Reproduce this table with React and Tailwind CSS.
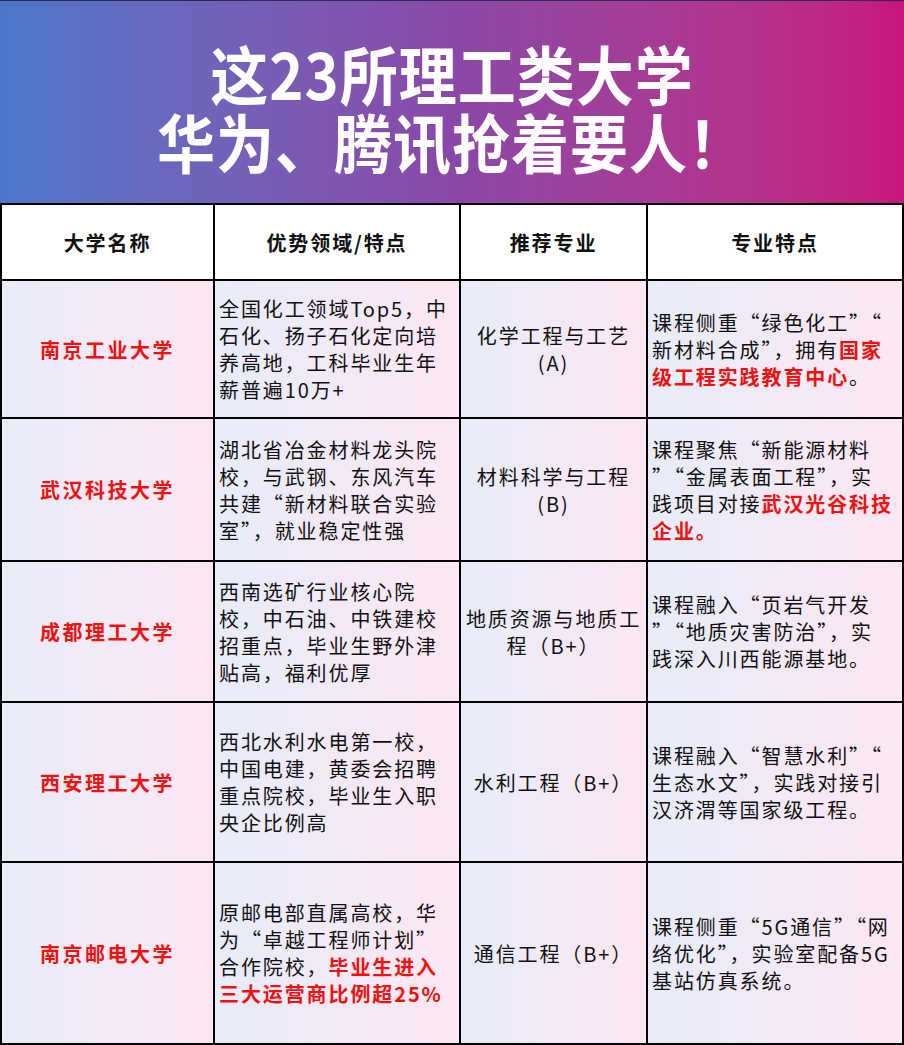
const font = { fontFamily: '"Noto Sans CJK SC", "Noto Sans", sans-serif' };

const rows = [
  {
    h: 'h-[136px]',
    name: '南京工业大学',
    strength: ['全国化工领域Top5，中', '石化、扬子石化定向培', '养高地，工科毕业生年', '薪普遍10万+'],
    major: ['化学工程与工艺', '(A)'],
    feature: [
      '课程侧重“绿色化工”“',
      ['新材料合成”，拥有', { red: '国家' }],
      [{ red: '级工程实践教育中心' }, '。'],
    ],
  },
  {
    h: 'h-[141px]',
    name: '武汉科技大学',
    strength: ['湖北省冶金材料龙头院', '校，与武钢、东风汽车', '共建“新材料联合实验', '室”，就业稳定性强'],
    major: ['材料科学与工程', '(B)'],
    feature: [
      '课程聚焦“新能源材料',
      '”“金属表面工程”，实',
      ['践项目对接', { red: '武汉光谷科技' }],
      [{ red: '企业。' }],
    ],
  },
  {
    h: 'h-[139px]',
    name: '成都理工大学',
    strength: ['西南选矿行业核心院', '校，中石油、中铁建校', '招重点，毕业生野外津', '贴高，福利优厚'],
    major: ['地质资源与地质工', '程（B+）'],
    feature: ['课程融入“页岩气开发', '”“地质灾害防治”，实', '践深入川西能源基地。'],
  },
  {
    h: 'h-[158px]',
    name: '西安理工大学',
    strength: ['西北水利水电第一校，', '中国电建，黄委会招聘', '重点院校，毕业生入职', '央企比例高'],
    major: ['水利工程（B+）'],
    feature: ['课程融入“智慧水利”“', '生态水文”，实践对接引', '汉济渭等国家级工程。'],
  },
  {
    h: 'h-[180px]',
    name: '南京邮电大学',
    strength: [
      '原邮电部直属高校，华',
      '为“卓越工程师计划”',
      ['合作院校，', { red: '毕业生进入' }],
      [{ red: '三大运营商比例超25%' }],
    ],
    major: ['通信工程（B+）'],
    feature: ['课程侧重“5G通信”“网', '络优化”，实验室配备5G', '基站仿真系统。'],
  },
];

function Lines({ lines, center }) {
  return (
    <div className={center ? 'text-center' : 'text-left'}>
      {lines.map((line, i) => (
        <div key={i} className="whitespace-nowrap">
          {(Array.isArray(line) ? line : [line]).map((seg, j) =>
            typeof seg === 'string' ? (
              <span key={j}>{seg}</span>
            ) : (
              <span key={j} className="font-bold text-[#f01010]">
                {seg.red}
              </span>
            )
          )}
        </div>
      ))}
    </div>
  );
}

const cellBg = 'bg-linear-to-r from-[#e8ecf9] to-[#fce7f3]';

export default function App() {
  return (
    <div className="w-[904px] h-[1045px] overflow-hidden bg-white" style={font}>
      <div className="h-[203px] border-t border-[#2a2a55] bg-linear-to-r from-[#4a77c9] via-[#8a48a8] to-[#c8147d] flex flex-col items-center justify-center pt-[8px] text-white font-bold text-[58px] leading-[68px] tracking-[1px]">
        <div className="scale-y-110">这23所理工类大学</div>
        <div className="scale-y-110">华为、腾讯抢着要人！</div>
      </div>

      <div className="grid grid-cols-[211px_244px_185px_254px] gap-[2px] p-[2px] bg-black text-[#111] text-[20px] leading-[27px] tracking-[1.9px]">
        {['大学名称', '优势领域/特点', '推荐专业', '专业特点'].map((t) => (
          <div key={t} className="h-[74px] bg-white flex items-center justify-center font-bold">
            {t}
          </div>
        ))}

        {rows.map((r) => (
          <div key={r.name} className="contents">
            <div className={`${r.h} ${cellBg} flex items-center justify-center font-bold text-[#f01010] tracking-[2.5px]`}>
              {r.name}
            </div>
            <div className={`${r.h} ${cellBg} flex items-center pl-[4px]`}>
              <Lines lines={r.strength} />
            </div>
            <div className={`${r.h} ${cellBg} flex items-center justify-center`}>
              <Lines lines={r.major} center />
            </div>
            <div className={`${r.h} ${cellBg} flex items-center pl-[4px]`}>
              <Lines lines={r.feature} />
            </div>
          </div>
        ))}
      </div>
    </div>
  );
}
